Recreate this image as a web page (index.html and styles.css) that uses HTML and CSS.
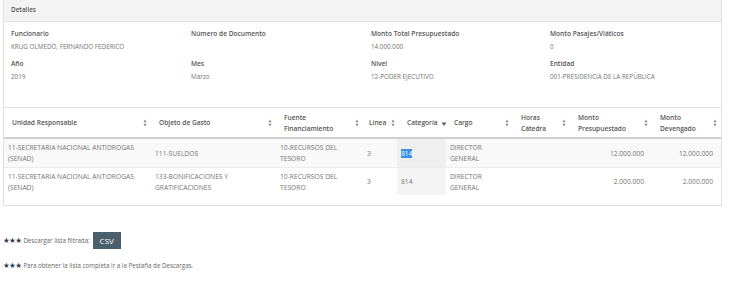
FILE: index.html
```html
<!DOCTYPE html>
<html>
<head>
<meta charset="utf-8">
<link rel="stylesheet" href="styles.css">
</head>
<body>
<div class="panel">
  <div class="panel-heading">Detalles</div>
  <div class="panel-body">
    <div class="field"><div class="label">Funcionario</div><div class="value">KRUG OLMEDO, FERNANDO FEDERICO</div></div>
    <div class="field"><div class="label">Número de Documento</div><div class="value">&nbsp;</div></div>
    <div class="field"><div class="label">Monto Total Presupuestado</div><div class="value">14.000.000</div></div>
    <div class="field"><div class="label">Monto Pasajes/Viáticos</div><div class="value">0</div></div>
    <div class="field"><div class="label">Año</div><div class="value">2019</div></div>
    <div class="field"><div class="label">Mes</div><div class="value">Marzo</div></div>
    <div class="field"><div class="label">Nivel</div><div class="value">12-PODER EJECUTIVO</div></div>
    <div class="field"><div class="label">Entidad</div><div class="value">001-PRESIDENCIA DE LA REPÚBLICA</div></div>
  </div>
  <table class="grid">
    <colgroup>
      <col class="c1"><col class="c2"><col class="c3"><col class="c4"><col class="c5"><col class="c6"><col class="c7"><col class="c8"><col class="c9">
    </colgroup>
    <thead>
      <tr>
        <th><div class="th"><span>Unidad Responsable</span><svg class="sort" viewBox="0 0 4 8"><path d="M2 0.5 L3.6 3.3 H0.4Z M2 7.5 L3.6 4.7 H0.4Z"/></svg></div></th>
        <th><div class="th"><span>Objeto de Gasto</span><svg class="sort" viewBox="0 0 4 8"><path d="M2 0.5 L3.6 3.3 H0.4Z M2 7.5 L3.6 4.7 H0.4Z"/></svg></div></th>
        <th><div class="th"><span>Fuente<br>Financiamiento</span><svg class="sort" viewBox="0 0 4 8"><path d="M2 0.5 L3.6 3.3 H0.4Z M2 7.5 L3.6 4.7 H0.4Z"/></svg></div></th>
        <th class="tight"><div class="th"><span>Línea</span><svg class="sort" viewBox="0 0 4 8"><path d="M2 0.5 L3.6 3.3 H0.4Z M2 7.5 L3.6 4.7 H0.4Z"/></svg></div></th>
        <th class="tight"><div class="th start"><span>Categoría</span><svg class="desc" viewBox="0 0 6 6"><path d="M0.5 1.5 H5.5 L3 5Z"/></svg></div></th>
        <th><div class="th"><span>Cargo</span><svg class="sort" viewBox="0 0 4 8"><path d="M2 0.5 L3.6 3.3 H0.4Z M2 7.5 L3.6 4.7 H0.4Z"/></svg></div></th>
        <th><div class="th"><span>Horas<br>Cátedra</span><svg class="sort" viewBox="0 0 4 8"><path d="M2 0.5 L3.6 3.3 H0.4Z M2 7.5 L3.6 4.7 H0.4Z"/></svg></div></th>
        <th><div class="th"><span>Monto<br>Presupuestado</span><svg class="sort" viewBox="0 0 4 8"><path d="M2 0.5 L3.6 3.3 H0.4Z M2 7.5 L3.6 4.7 H0.4Z"/></svg></div></th>
        <th><div class="th"><span>Monto<br>Devengado</span><svg class="sort" viewBox="0 0 4 8"><path d="M2 0.5 L3.6 3.3 H0.4Z M2 7.5 L3.6 4.7 H0.4Z"/></svg></div></th>
      </tr>
    </thead>
    <tbody>
      <tr class="odd">
        <td>11-SECRETARIA NACIONAL ANTIDROGAS (SENAD)</td>
        <td>111-SUELDOS</td>
        <td>10-RECURSOS DEL TESORO</td>
        <td>3</td>
        <td class="sorted"><span class="sel">814</span></td>
        <td>DIRECTOR GENERAL</td>
        <td></td>
        <td class="num">12.000.000</td>
        <td class="num">12.000.000</td>
      </tr>
      <tr>
        <td>11-SECRETARIA NACIONAL ANTIDROGAS (SENAD)</td>
        <td>133-BONIFICACIONES Y GRATIFICACIONES</td>
        <td>10-RECURSOS DEL TESORO</td>
        <td>3</td>
        <td class="sorted">814</td>
        <td>DIRECTOR GENERAL</td>
        <td></td>
        <td class="num">2.000.000</td>
        <td class="num">2.000.000</td>
      </tr>
    </tbody>
  </table>
</div>
<div class="notes">
  <div class="note"><span class="stars">★★★</span> Descargar lista filtrada: <button class="csv">CSV</button></div>
  <div class="note second"><span class="stars">★★★</span> Para obtener la lista completa ir a la Pestaña de Descargas.</div>
</div>
</body>
</html>
```

FILE: styles.css
```css
html, body {
  margin: 0;
  padding: 0;
  background: #fff;
}
body {
  font-family: "Open Sans", "Liberation Sans", sans-serif;
  font-size: 6.6px;
  color: #666;
}
.panel {
  margin: -1px 0 0 3px;
  width: 717px;
  border: 1px solid #e1e1e1;
  padding-bottom: 10px;
}
.panel-heading {
  height: 22px;
  box-sizing: border-box;
  padding: 4px 7px 0;
  background: #f3f3f3;
  border-bottom: 1px solid #e3e3e3;
  font-weight: 600;
  font-size: 6.4px;
  color: #555;
  line-height: 11px;
}
.panel-body {
  display: grid;
  grid-template-columns: 180px 180px 179px auto;
  align-content: start;
  padding: 6px 7px 0;
  height: 86px;
  box-sizing: border-box;
  border-bottom: 1px solid #e3e3e3;
}
.field {
  height: 30px;
}
.label {
  font-weight: 600;
  font-size: 6.6px;
  color: #555;
  line-height: 11px;
  height: 11px;
  margin-bottom: 2px;
}
.value {
  line-height: 11px;
  font-size: 6.3px;
  color: #747474;
}
.grid {
  border-collapse: collapse;
  table-layout: fixed;
  width: 717px;
}
.c1 { width: 147px; }
.c2 { width: 125px; }
.c3 { width: 87px; }
.c4 { width: 34px; }
.c5 { width: 49px; }
.c6 { width: 67px; }
.c7 { width: 57px; }
.c8 { width: 82px; }
.c9 { width: 69px; }
.grid th {
  height: 29px;
  padding: 0 4px 0 8px;
  text-align: left;
  font-weight: 600;
  font-size: 6.6px;
  color: #555;
  line-height: 11px;
  border-bottom: 2px solid #cfcfcf;
  vertical-align: middle;
}
.grid th.tight {
  padding-right: 2px;
  padding-left: 6px;
}
.th {
  display: flex;
  align-items: center;
  justify-content: space-between;
}
.th.start {
  justify-content: flex-start;
  gap: 3px;
  padding-left: 4px;
}
.sort {
  width: 4px;
  height: 8px;
  flex: none;
  fill: #8a8a8a;
}
.desc {
  width: 6px;
  height: 6px;
  flex: none;
  fill: #4d6677;
  margin-top: 2px;
}
.grid td {
  height: 27px;
  padding: 0 8px 0 4px;
  line-height: 11px;
  font-size: 6.7px;
  color: #747474;
  vertical-align: middle;
  border-top: 1px solid #ececec;
}
.grid tbody tr:first-child td {
  border-top: none;
  height: 28px;
}
.grid tr.odd td {
  background: #f9f9f9;
}
.grid td.sorted {
  background: #f4f4f4;
}
.grid tr.odd td.sorted {
  background: #efefef;
}
.grid td.num {
  text-align: right;
}
.sel {
  background: #3c8fe8;
  color: #fff;
}
.notes {
  padding: 26px 0 0 3px;
}
.note {
  display: flex;
  align-items: center;
  gap: 2px;
  line-height: 11px;
  font-size: 6.2px;
  color: #666;
}
.note.second {
  margin-top: 11px;
}
.stars {
  color: #2d3e50;
  font-size: 7.5px;
  letter-spacing: -0.6px;
  font-family: "DejaVu Sans", sans-serif;
}
.csv {
  margin-left: 1px;
  height: 17px;
  width: 28px;
  border: none;
  background: #4b5f6c;
  color: #fff;
  font-family: "Open Sans", "Liberation Sans", sans-serif;
  font-size: 8px;
  padding: 0;
}
```
